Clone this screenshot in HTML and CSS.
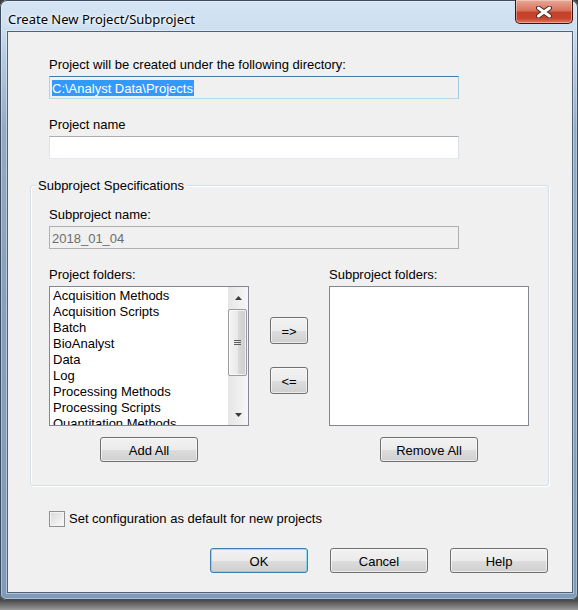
FILE: index.html
```html
<!DOCTYPE html>
<html lang="en">
<head>
    <meta charset="UTF-8">
    <title>Create New Project/Subproject</title>
    <link rel="stylesheet" href="styles.css">
</head>
<body>

<div class="window">
    <div class="titlebar">
        <span class="title">Create New Project/Subproject</span>
        <div class="close-btn">
            <svg width="16" height="12" viewBox="0 0 16 12">
                <path d="M2.5 2 L13.5 10 M13.5 2 L2.5 10" stroke="#4b2a24" stroke-width="5" stroke-linecap="round"/>
                <path d="M2.5 2 L13.5 10 M13.5 2 L2.5 10" stroke="#fff" stroke-width="3" stroke-linecap="round"/>
            </svg>
        </div>
    </div>

    <div class="client">
        <div class="fields">
            <div class="lbl">Project will be created under the following directory:</div>
            <div class="textbox readonly focused"><span class="sel">C:\Analyst Data\Projects</span></div>
            <div class="lbl gap">Project name</div>
            <div class="textbox"></div>
        </div>

        <div class="groupbox">
            <div class="group-title">Subproject Specifications</div>
            <div class="lbl sub-name">Subproject name:</div>
            <div class="textbox disabled">2018_01_04</div>

            <div class="folders">
                <div class="folder-col">
                    <div class="lbl">Project folders:</div>
                    <div class="listbox">
                        <ul class="items">
                            <li>Acquisition Methods</li>
                            <li>Acquisition Scripts</li>
                            <li>Batch</li>
                            <li>BioAnalyst</li>
                            <li>Data</li>
                            <li>Log</li>
                            <li>Processing Methods</li>
                            <li>Processing Scripts</li>
                            <li>Quantitation Methods</li>
                        </ul>
                        <div class="scrollbar">
                            <div class="sb-arrow">
                                <svg width="7" height="4" viewBox="0 0 7 4"><path d="M0 4 L3.5 0 L7 4 Z" fill="#3c3c3c"/></svg>
                            </div>
                            <div class="sb-thumb"><span class="grip"></span></div>
                            <div class="sb-arrow down">
                                <svg width="7" height="4" viewBox="0 0 7 4"><path d="M0 0 L3.5 4 L7 0 Z" fill="#3c3c3c"/></svg>
                            </div>
                        </div>
                    </div>
                    <button class="btn">Add All</button>
                </div>

                <div class="move-col">
                    <button class="btn small first">=&gt;</button>
                    <button class="btn small">&lt;=</button>
                </div>

                <div class="folder-col">
                    <div class="lbl">Subproject folders:</div>
                    <div class="listbox"></div>
                    <button class="btn">Remove All</button>
                </div>
            </div>
        </div>

        <label class="check-row"><span class="checkbox"></span><span class="check-text">Set configuration as default for new projects</span></label>

        <div class="buttons">
            <button class="btn default">OK</button>
            <button class="btn">Cancel</button>
            <button class="btn">Help</button>
        </div>
    </div>
</div>

</body>
</html>
```

FILE: styles.css
```css
* {
    box-sizing: border-box;
}
body {
    margin: 0;
    height: 610px;
    overflow: hidden;
    font-family: "Liberation Sans", Arial, sans-serif;
    font-size: 13px;
    color: #000;
    background: linear-gradient(to bottom, #3a3a3a 0, #484848 600px, #9a9a9a 610px);
}

/* aero frame */
.window {
    width: 578px;
    height: 600px;
    padding: 0 5px 0 7px;
    border-radius: 7px 7px 6px 6px;
    background: linear-gradient(to bottom, #d6e5f4 0, #cddff0 28px, #b3c9df 60px, #92abc5 130px, #86a1bd 300px, #7f9bb9 100%);
    box-shadow: inset 0 0 0 1px #3d4d5f, inset 0 0 0 2px rgba(255, 255, 255, 0.35);
}
.titlebar {
    height: 31px;
    display: flex;
    justify-content: space-between;
    align-items: flex-start;
}
.title {
    font-family: "Noto Sans", sans-serif;
    font-size: 13px;
    line-height: 18px;
    padding: 10px 0 0 1px;
    text-shadow: 0 0 6px #fff, 0 0 3px #fff;
}
.close-btn {
    width: 58px;
    height: 24px;
    display: flex;
    align-items: center;
    justify-content: center;
    border: 1px solid #3b1510;
    border-top: none;
    border-radius: 0 0 5px 5px;
    background: linear-gradient(to bottom, #e8a895 0, #d9735e 45%, #c4402a 55%, #c8442c 80%, #e07a5f 100%);
    box-shadow: inset 0 0 0 1px rgba(255, 255, 255, 0.35);
}

/* dialog body */
.client {
    height: 562px;
    background: #f0f0f0;
    border: 1px solid #4f6278;
    box-shadow: 0 0 0 1px rgba(255, 255, 255, 0.4);
}
.fields {
    padding: 24px 0 0 41px;
}
.lbl {
    line-height: 16px;
    height: 16px;
    padding-top: 1px;
    white-space: nowrap;
}
.lbl.gap {
    margin-top: 17px;
}
.textbox {
    width: 410px;
    height: 23px;
    margin-top: 4px;
    padding: 3px 2px 0;
    line-height: 16px;
    background: #fff;
    border: 1px solid;
    border-color: #abadb3 #dbdfe6 #e3e9ef #e2e3ea;
}
.textbox.readonly {
    background: #f0f0f0;
}
.textbox.focused {
    border-color: #3d7bad #a4c9e3 #b7d9ed #b5cfe7;
}
.textbox.disabled {
    background: #f0f0f0;
    border-color: #afafaf;
    color: #6d6d6d;
    padding-top: 4px;
}
.sel {
    display: inline-block;
    height: 16px;
    line-height: 17px;
    background: #3399ff;
    color: #fff;
    padding-right: 1px;
}

/* Subproject Specifications */
.groupbox {
    width: 519px;
    height: 301px;
    margin: 26px 0 0 22px;
    padding-left: 18px;
    border: 1px solid #d5dfe5;
    border-radius: 3px;
    box-shadow: inset 1px 1px 0 #fff, 1px 1px 0 #fff;
}
.group-title {
    width: max-content;
    height: 16px;
    margin: -9px 0 0 -13px;
    padding: 1px 2px 0;
    line-height: 16px;
    background: #f0f0f0;
}
.lbl.sub-name {
    margin-top: 13px;
}
.folders {
    display: flex;
    gap: 21px;
    margin-top: 17px;
}
.folder-col {
    width: 200px;
    display: flex;
    flex-direction: column;
}
.listbox {
    width: 200px;
    height: 140px;
    margin-top: 4px;
    display: flex;
    background: #fff;
    border: 1px solid #828790;
}
.items {
    flex: 1;
    margin: 0;
    padding: 1px 0 0 3px;
    list-style: none;
    overflow: hidden;
}
.items li {
    line-height: 16px;
    white-space: nowrap;
}
.scrollbar {
    width: 20px;
    display: flex;
    flex-direction: column;
    justify-content: space-between;
    background: linear-gradient(to right, #e6e6e6, #f6f6f6);
}
.sb-arrow {
    height: 21px;
    display: flex;
    align-items: center;
    justify-content: center;
}
.sb-thumb {
    width: 19px;
    height: 67px;
    margin-bottom: 28px;
    display: flex;
    align-items: center;
    justify-content: center;
    border: 1px solid #9a9a9a;
    border-radius: 2px;
    background: linear-gradient(to right, #f4f4f4 0, #e9e9e9 50%, #dadada 51%, #cecece 100%);
    box-shadow: inset 0 0 0 1px rgba(255, 255, 255, 0.7);
}
.grip {
    width: 7px;
    height: 5px;
    background: repeating-linear-gradient(to bottom, #5e5e5e 0, #5e5e5e 1px, transparent 1px, transparent 2px);
}
.move-col {
    width: 38px;
    display: flex;
    flex-direction: column;
}

/* push buttons */
.btn {
    width: 98px;
    height: 25px;
    padding: 1px 0 0;
    font: inherit;
    color: #000;
    border: 1px solid #707070;
    border-radius: 3px;
    background: linear-gradient(to bottom, #f2f2f2 0, #ebebeb 50%, #dddddd 51%, #cfcfcf 100%);
    box-shadow: inset 0 0 0 1px rgba(255, 255, 255, 0.6);
}
.folder-col .btn {
    align-self: center;
    margin-top: 11px;
}
.btn.small {
    width: 38px;
    height: 27px;
    margin-top: 23px;
}
.btn.small.first {
    margin-top: 51px;
}
.btn.default {
    border-color: #3c7fb1;
    box-shadow: inset 0 0 0 1px rgba(72, 208, 255, 0.55);
}

.check-row {
    display: flex;
    align-items: center;
    gap: 4px;
    margin: 24px 0 0 41px;
    line-height: 16px;
}
.check-text {
    padding-top: 1px;
}
.checkbox {
    width: 16px;
    height: 16px;
    border: 1px solid #8f8f8f;
    background: linear-gradient(135deg, #d8d8d8, #fbfbfb);
    box-shadow: inset 0 0 0 1px #f4f4f4;
}
.buttons {
    display: flex;
    gap: 22px;
    margin-top: 21px;
    padding-left: 202px;
}
```
